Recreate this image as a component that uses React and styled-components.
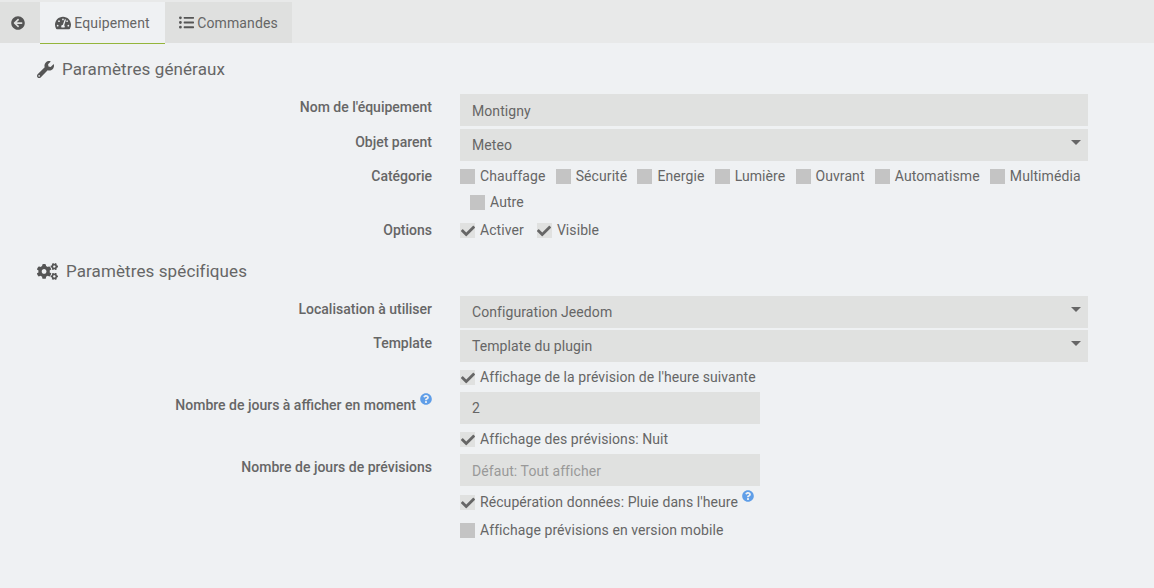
import React from "react";
import styled, { createGlobalStyle } from "styled-components";
//icons
import {
  FaArrowCircleLeft,
  FaTachometerAlt,
  FaListUl,
  FaWrench,
  FaCogs,
  FaCheck,
  FaQuestionCircle,
} from "react-icons/fa";

const GlobalStyle = createGlobalStyle`
  html, body {
    margin: 0;
    padding: 0;
    background: #eff1f3;
  }
  body {
    font-family: "Roboto", "Liberation Sans", sans-serif;
    font-size: 14px;
    color: #666;
  }
`;

const Check = ({ checked, label, indent, help }) => (
  <CheckLabel $indent={indent}>
    <Box $checked={checked}>{checked && <FaCheck />}</Box>
    {label}
    {help && <HelpIcon $raised />}
  </CheckLabel>
);

const SelectField = ({ value }) => (
  <Field>
    {value}
    <Caret />
  </Field>
);

const App = () => {
  return (
    <Page>
      <GlobalStyle />
      <Tabs>
        <BackTab>
          <FaArrowCircleLeft />
        </BackTab>
        <Tab $active>
          <GaugeIcon />
          Equipement
        </Tab>
        <Tab>
          <FaListUl />
          Commandes
        </Tab>
      </Tabs>
      <Content>
        <Legend>
          <FaWrench />
          Paramètres généraux
        </Legend>
        <Group>
          <Row>
            <Label>Nom de l'équipement</Label>
            <Field $low>Montigny</Field>
          </Row>
          <Row>
            <Label>Objet parent</Label>
            <SelectField value="Meteo" />
          </Row>
          <CheckRow>
            <Label>Catégorie</Label>
            <CheckWrap>
              <Check label="Chauffage" />
              <Check label="Sécurité" />
              <Check label="Energie" />
              <Check label="Lumière" />
              <Check label="Ouvrant" />
              <Check label="Automatisme" />
              <Check label="Multimédia" />
              <Check label="Autre" indent />
            </CheckWrap>
          </CheckRow>
          <CheckRow $top={5}>
            <Label>Options</Label>
            <CheckWrap $spread>
              <Check checked label="Activer" />
              <Check checked label="Visible" />
            </CheckWrap>
          </CheckRow>
        </Group>
        <Legend>
          <CogsIcon />
          Paramètres spécifiques
        </Legend>
        <Group>
          <Row $gap={2}>
            <Label>Localisation à utiliser</Label>
            <SelectField value="Configuration Jeedom" />
          </Row>
          <Row>
            <Label>Template</Label>
            <SelectField value="Template du plugin" />
          </Row>
          <CheckRow>
            <Label />
            <Check checked label="Affichage de la prévision de l'heure suivante" />
          </CheckRow>
          <Row>
            <Label>
              Nombre de jours à afficher en moment
              <HelpIcon />
            </Label>
            <Field $short>2</Field>
          </Row>
          <CheckRow>
            <Label />
            <Check checked label="Affichage des prévisions: Nuit" />
          </CheckRow>
          <Row>
            <Label>Nombre de jours de prévisions</Label>
            <Field $short $low $placeholder>
              Défaut: Tout afficher
            </Field>
          </Row>
          <CheckRow $top={5}>
            <Label />
            <Check checked help label="Récupération données: Pluie dans l'heure" />
          </CheckRow>
          <CheckRow $top={5}>
            <Label />
            <Check label="Affichage prévisions en version mobile" />
          </CheckRow>
        </Group>
      </Content>
    </Page>
  );
};

const Page = styled.div`
  min-height: 588px;
`;

const Tabs = styled.div`
  display: flex;
  box-sizing: border-box;
  height: 43px;
  padding-top: 2px;
  background: #e8e9e9;
`;

const BackTab = styled.div`
  width: 40px;
  display: flex;
  align-items: center;
  justify-content: center;
  background: #dfe0df;
  color: #555;
  font-size: 14px;
  padding-right: 4px;
  box-sizing: border-box;
`;

const Tab = styled.div`
  display: flex;
  align-items: center;
  justify-content: center;
  gap: 3px;
  width: ${(p) => (p.$active ? "125px" : "127px")};
  height: ${(p) => (p.$active ? "42px" : "41px")};
  box-sizing: border-box;
  background: ${(p) => (p.$active ? "#eff1f3" : "#dfe0df")};
  border-bottom: ${(p) => (p.$active ? "1px solid #94b53a" : "none")};
  color: #666;
  letter-spacing: 0.12px;
  svg {
    font-size: 15px;
    color: #555;
  }
`;

const GaugeIcon = styled(FaTachometerAlt)`
  && {
    font-size: 16px;
  }
`;

const Content = styled.div`
  padding-left: 37px;
  width: 1051px;
`;

const Legend = styled.div`
  display: flex;
  align-items: center;
  gap: 8px;
  height: 24px;
  margin-top: 14px;
  margin-bottom: 13px;
  font-size: 17px;
  letter-spacing: 0.1px;
  color: #666;
  svg {
    font-size: 17px;
    color: #555;
  }
`;

const CogsIcon = styled(FaCogs)`
  && {
    width: 21px;
    height: 17px;
  }
`;

const Group = styled.div`
  display: flex;
  flex-direction: column;
`;

const Row = styled.div`
  display: flex;
  margin-bottom: ${(p) => (p.$gap !== undefined ? p.$gap : 3)}px;
`;

const CheckRow = styled.div`
  display: flex;
  margin-top: ${(p) => (p.$top !== undefined ? p.$top : 4)}px;
  margin-bottom: 6px;
`;

const Label = styled.div`
  width: 395px;
  flex-shrink: 0;
  margin-right: 28px;
  text-align: right;
  font-weight: 500;
  color: #666;
  line-height: 26px;
  position: relative;
  ${CheckRow} & {
    line-height: 17px;
  }
`;

const Field = styled.div`
  position: relative;
  box-sizing: border-box;
  width: ${(p) => (p.$short ? "300px" : "628px")};
  height: 32px;
  line-height: ${(p) => (p.$low ? "34px" : "32px")};
  padding: 0 12px;
  background: #e0e1e0;
  letter-spacing: 0.08px;
  color: ${(p) => (p.$placeholder ? "#999" : "#666")};
`;

const Caret = styled.span`
  position: absolute;
  right: 7px;
  top: 11px;
  width: 0;
  height: 0;
  border-left: 5px solid transparent;
  border-right: 5px solid transparent;
  border-top: 5px solid #666;
`;

const CheckLabel = styled.label`
  display: inline-flex;
  align-items: flex-start;
  height: 17px;
  line-height: 16px;
  margin-left: ${(p) => (p.$indent ? "10px" : "0")};
  white-space: nowrap;
  letter-spacing: 0.08px;
`;

const CheckWrap = styled.div`
  display: flex;
  flex-wrap: wrap;
  width: 636px;
  margin-right: -8px;
  row-gap: 9px;
  ${CheckLabel} {
    margin-right: ${(p) => (p.$spread ? "13px" : "10.2px")};
  }
`;

const Box = styled.span`
  display: inline-flex;
  align-items: center;
  justify-content: center;
  width: 15px;
  height: 15px;
  margin-top: 1px;
  margin-right: 5px;
  background: ${(p) => (p.$checked ? "#e0e1e0" : "#c4c4c4")};
  color: #666;
  font-size: 14px;
`;

const HelpIcon = styled(FaQuestionCircle)`
  color: #5f9ee8;
  font-size: 12px;
  margin-left: 4px;
  position: relative;
  top: ${(p) => (p.$raised ? "-4px" : "-5px")};
`;

export default App;
